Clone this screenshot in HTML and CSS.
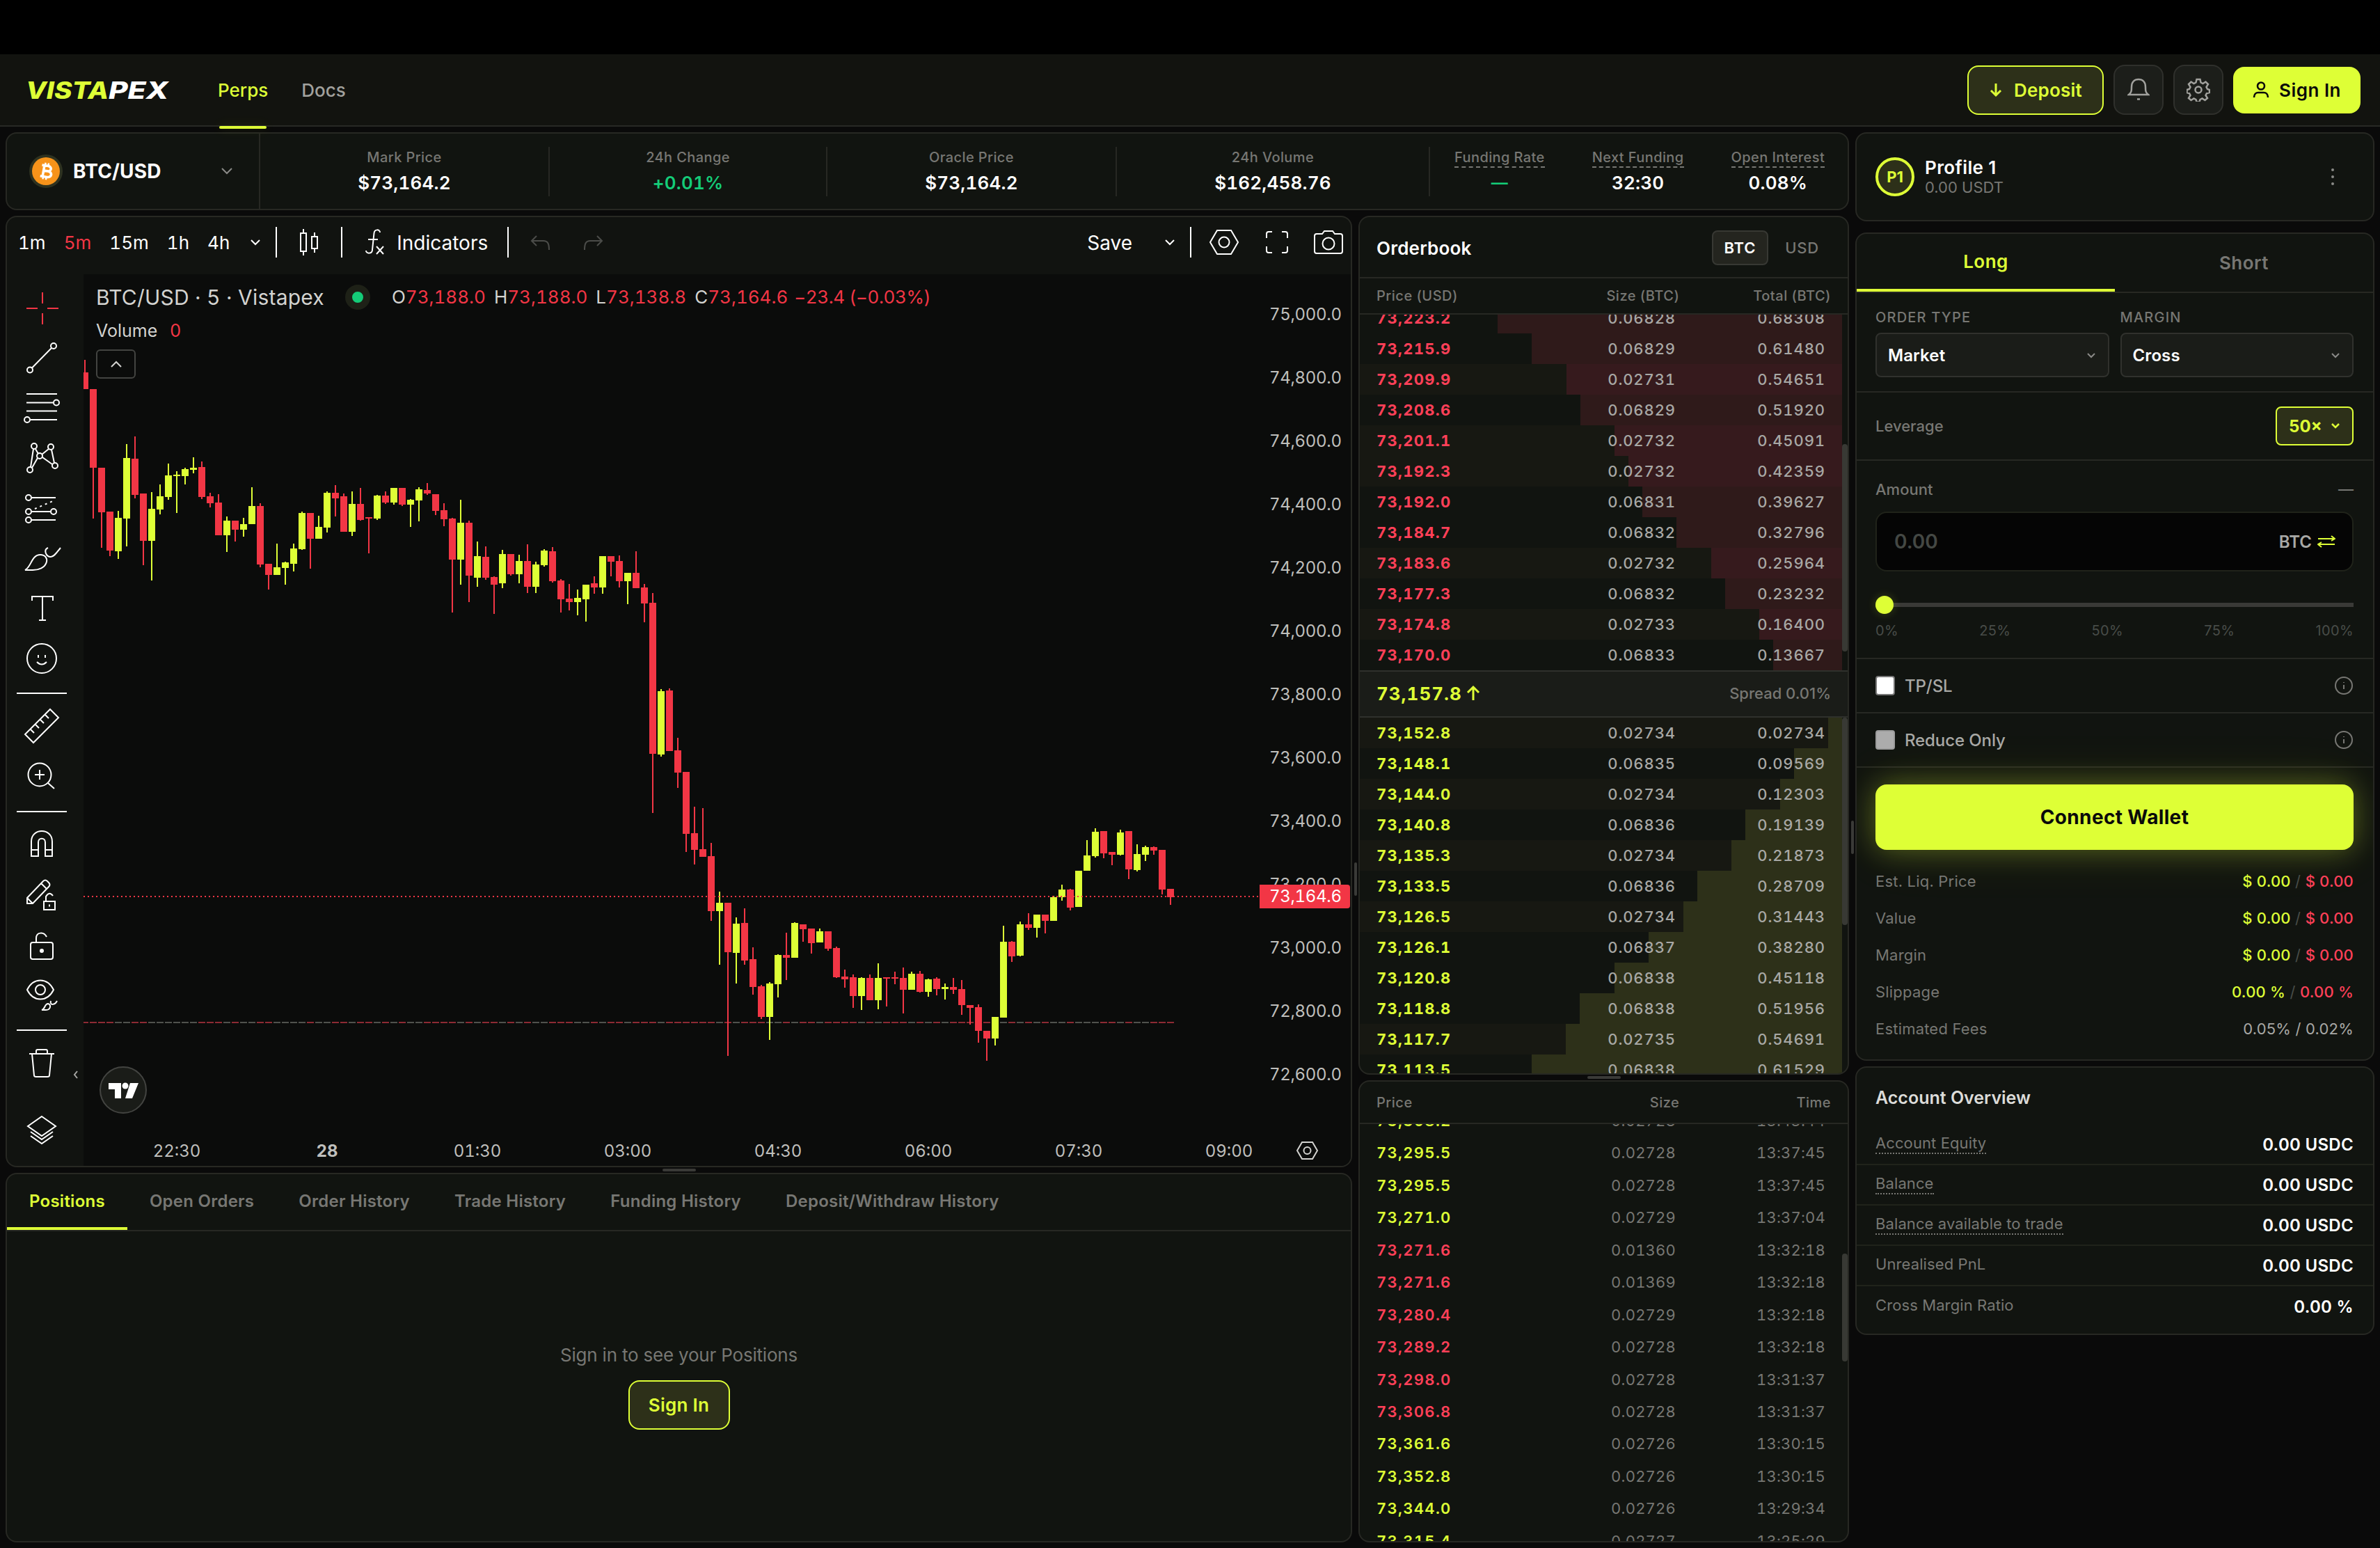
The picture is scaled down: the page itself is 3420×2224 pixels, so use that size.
FILE: index.html
```
<!DOCTYPE html>
<html lang="en">
<head>
  <meta charset="UTF-8" />
  <title>BTC/USD | Vistapex</title>
  <link rel="stylesheet" href="styles.css">
</head>
<body>

  <div class="notch"></div>

  <header class="header">
    <svg class="logo" width="208" height="40" viewBox="0 0 208 40">
      <g font-family="Inter, sans-serif" font-size="33.500" font-weight="800" font-style="italic">
        <text x="-1" y="33" fill="#deff36" textLength="119" lengthAdjust="spacingAndGlyphs">VISTA</text>
        <text x="118" y="33" fill="#ffffff" textLength="86" lengthAdjust="spacingAndGlyphs">PEX</text>
      </g>
    </svg>
    <nav class="nav">
      <a class="active">Perps</a>
      <a>Docs</a>
    </nav>
    <div class="header-actions">
      <button class="btn-outline deposit">
        <svg width="20" height="24" viewBox="0 0 20 24"><path d="M10 3v17M3 13l7 7 7-7" /></svg>
        Deposit
      </button>
      <button class="btn-icon">
        <svg width="32" height="34" viewBox="0 0 32 34"><path d="M2 24h28c-4-3-4-6-4-11C26 6 22 2 16 2S6 6 6 13c0 5 0 8-4 11zM14 30.500h4" /></svg>
      </button>
      <button class="btn-icon">
        <svg width="34" height="34" viewBox="0 0 34 34"><path d="M14.500 2h5l1 4.500 3 1.500 4-2.500 3.500 3.500-2.500 4 1.500 3 3 1v4l-4 1-1.500 3 2.500 4-3.500 3-4-2.500-3 1.500-1 3.500h-4l-1-3.500-3-1.500-4 2.500-3.500-3 2.500-4-1.500-3-3.500-1v-4l3.500-1 1.500-3-2.500-4 3.500-3.500 4 2.500 3-1.500z" /><circle cx="17" cy="17" r="4.500" /></svg>
      </button>
      <button class="btn-primary signin">
        <svg width="24" height="26" viewBox="0 0 24 26"><circle cx="12" cy="7.500" r="5" /><path d="M2 24c0-5 3-7 6-7h8c3 0 6 2 6 7" /></svg>
        Sign In
      </button>
    </div>
  </header>

  <main class="main">
    <div class="left">

      <section class="panel ticker">
        <div class="pair">
          <svg width="48" height="48" viewBox="0 0 48 48">
            <circle cx="24" cy="24" r="24" fill="#2e3220" />
            <circle cx="24" cy="24" r="20" fill="#f7931a" />
            <g transform="rotate(10 24 24)" fill="none" stroke="#fff" stroke-width="3.600">
              <path d="M17 16h9c6 0 6 7.500 0 7.500h-5.500h6.500c7 0 7 8.500 0 8.500h-10M20.500 16v16" />
              <path d="M21.500 12v4M26 12v4M21.500 32v4M26 32v4" stroke-width="2.500" />
            </g>
          </svg>
          <b>BTC/USD</b>
          <svg class="chev" width="18" height="12" viewBox="0 0 18 12"><path d="M2 2l7 7 7-7" /></svg>
        </div>
        <div class="stat w1"><span>Mark Price</span><b>$73,164.2</b></div>
        <div class="stat w2"><span>24h Change</span><b class="green">+0.01%</b></div>
        <div class="stat w3"><span>Oracle Price</span><b>$73,164.2</b></div>
        <div class="stat w4"><span>24h Volume</span><b>$162,458.76</b></div>
        <div class="stat-group">
          <div class="stat hint"><span>Funding Rate</span><b class="green dash">—</b></div>
          <div class="stat hint"><span>Next Funding</span><b>32:30</b></div>
          <div class="stat hint"><span>Open Interest</span><b>0.08%</b></div>
        </div>
      </section>

      <div class="workspace">
        <div class="chart-col">
          <section class="panel chart">
            <div class="chart-top">
              <span>1m</span><span class="on">5m</span><span>15m</span><span>1h</span><span>4h</span>
              <svg class="ct-chev" width="16" height="10" viewBox="0 0 16 10"><path d="M2 2l6 6 6-6" /></svg>
              <i></i>
              <svg class="ct-candles" width="32" height="42" viewBox="0 0 32 42"><path d="M3 8h8v26H3zM7 2v6M7 34v6M19 13h8v17h-8zM23 7v6M23 30v6" /></svg>
              <i></i>
              <svg class="ct-fx" width="30" height="40" viewBox="0 0 30 40"><path d="M22 6c0-5-8-5-8.500 1L11 31c0 6-9 6-9 1M5 16h14M17 26l10 11M27 26L17 37" /></svg>
              <span class="ct-ind">Indicators</span>
              <i></i>
              <svg class="ct-undo" width="30" height="24" viewBox="0 0 30 24"><path d="M9 2L2 9l7 7M2 9h17c6 0 8 4 8 13" /></svg>
              <svg class="ct-undo" width="30" height="24" viewBox="0 0 30 24"><path d="M21 2l7 7-7 7M28 9H11c-6 0-8 4-8 13" /></svg>
              <div class="chart-top-right">
                <span class="ct-save">Save</span>
                <svg class="ct-chev save-chev" width="16" height="10" viewBox="0 0 16 10"><path d="M2 2l6 6 6-6" /></svg>
                <i></i>
                <svg class="ct-gear" width="44" height="38" viewBox="0 0 44 38"><path d="M12 2h20l10 17-10 17H12L2 19z" /><circle cx="22" cy="19" r="7.500" /></svg>
                <svg class="ct-full" width="34" height="34" viewBox="0 0 34 34"><path d="M2 11V5q0-3 3-3h5M24 2h5q3 0 3 3v6M32 23v6q0 3-3 3h-5M10 32H5q-3 0-3-3v-6" /></svg>
                <svg class="ct-cam" width="44" height="36" viewBox="0 0 44 36"><path d="M5 6h8l3-4h12l3 4h8q3 0 3 3v22q0 3-3 3H5q-3 0-3-3V9q0-3 3-3z" /><circle cx="22" cy="20" r="8.500" /></svg>
              </div>
            </div>
            <div class="chart-body">
              <div class="tools">
                <svg class="red" viewBox="0 0 56 56"><path d="M29 5v16M29 35v16M6 28h16M36 28h16" /></svg>
                <svg viewBox="0 0 56 56"><circle cx="11" cy="44.500" r="4" /><circle cx="45" cy="10" r="4" /><path d="M14 41.500L42 13" /></svg>
                <svg viewBox="0 0 56 56"><path d="M6 7h44M6 19.500h38M6 31.500h44M12 44h38" /><circle cx="49" cy="19.500" r="4" /><circle cx="7" cy="44" r="4" /></svg>
                <svg viewBox="0 0 56 56"><circle cx="17" cy="10" r="4" /><circle cx="41" cy="11" r="4" /><circle cx="25" cy="24" r="4" /><circle cx="11" cy="44" r="4" /><circle cx="47" cy="38" r="4" /><path d="M16 14l-4 26M19 14l4 7M22 27L14 41M28 22l10-8M29 26l14 10M42 15l4 19" /></svg>
                <svg viewBox="0 0 56 56"><circle cx="9" cy="12" r="4" /><circle cx="9" cy="32" r="4" /><circle cx="45" cy="32" r="4" /><circle cx="9" cy="44" r="4" /><path d="M13 12h35M13 32h28M13 44h35" /><path d="M18 28L46 16" stroke-dasharray="3 5" /></svg>
                <svg viewBox="0 0 56 56"><path d="M4 44c9-4 9-22 22-22 7 0 10 5 9 10-2 9-12 12-20 12zM37 12c-7 3-3 13 4 13 5 0 9-7 14-13" /></svg>
                <svg viewBox="0 0 56 56"><path d="M14 16v-6h30v6M29 10v34M24 44h10" /></svg>
                <svg viewBox="0 0 56 56"><circle cx="28" cy="27" r="21" /><path d="M21 32q7 7 14 0" /><path d="M22 24h2M32 24h2" stroke-width="4" /></svg>
                <hr>
                <svg viewBox="0 0 56 56"><path d="M40 2l12 12-36 36L4 38zM12 31l5 5M19 24l5 5M26 17l5 5M33 10l5 5" /></svg>
                <svg viewBox="0 0 56 56"><circle cx="25" cy="24" r="16.500" /><path d="M37 36l9 8M18 24h14M25 17v14" /></svg>
                <hr>
                <svg viewBox="0 0 56 56"><path d="M13 43V22c0-20 30-20 30 0v21H33V23c0-7-10-7-10 0v20zM13 34h10M33 34h10" /></svg>
                <svg viewBox="0 0 56 56"><path d="M7 39v-8L30 7q3-3 6 0l2 2q3 3 0 6L15 39zM7 31l8 8M27 10l8 8M31 36h16v12H31zM34 36v-7q5-8 10-1" /><path d="M38 42h2" stroke-width="3" /></svg>
                <svg viewBox="0 0 56 56"><path d="M15 23h26q3 0 3 3v18q0 3-3 3H15q-3 0-3-3V26q0-3 3-3zM20 23v-6c0-9 11-10 15-2" /><circle cx="28" cy="35" r="1.500" stroke-width="3" /></svg>
                <svg viewBox="0 0 56 56"><path d="M7 19c9-18 29-18 38 0-9 18-29 18-38 0z" /><circle cx="26" cy="19" r="7" /><path d="M28 48c5-1 4-9 9-9 5 1 4 9-3 9zM41 35c-2 7 6 6 9 0" /></svg>
                <hr>
                <svg viewBox="0 0 56 56"><path d="M10 13h36M20 13V9q0-2 2-2h12q2 0 2 2v4M14 13l3 31q0 2 3 2h16q3 0 3-2l3-31" /></svg>
                <svg class="layers" viewBox="0 0 56 56"><path d="M28 9l20 14-20 14L8 23zM12 31l16 11 16-11M12 37l16 11 16-11" /></svg>
                <div class="tools-hide"><svg viewBox="0 0 8 14"><path d="M6 2L2 7l4 5" /></svg></div>
              </div>
              <div class="plot">
                <svg class="plot-svg" id="plot" viewBox="120 394 1821 1281"></svg>
                <div class="legend">
                  <div class="legend-main">
                    <span class="name">BTC/USD · 5 · Vistapex</span>
                    <em></em>
                    <span>O<b>73,188.0</b></span><span>H<b>73,188.0</b></span><span>L<b>73,138.8</b></span><span>C<b>73,164.6</b></span><span class="chg"><b>−23.4 (−0.03%)</b></span>
                  </div>
                  <div class="legend-vol">Volume <b>0</b></div>
                  <div class="legend-fold"><svg width="18" height="12" viewBox="0 0 18 12"><path d="M2 10l7-7 7 7" /></svg></div>
                </div>
              </div>
            </div>
          </section>

          <div class="split-h"><i></i></div>

          <section class="panel positions">
            <div class="tabs">
              <a class="active">Positions</a><a>Open Orders</a><a>Order History</a><a>Trade History</a><a>Funding History</a><a>Deposit/Withdraw History</a>
            </div>
            <div class="empty">
              <p>Sign in to see your Positions</p>
              <button class="btn-outline">Sign In</button>
            </div>
          </section>
        </div>

        <div class="split-v"><i></i></div>

        <div class="book-col">
          <section class="panel book">
            <div class="book-title">
              <b>Orderbook</b>
              <span class="unit on">BTC</span><span class="unit">USD</span>
            </div>
            <div class="cols head"><span>Price (USD)</span><span>Size (BTC)</span><span>Total (BTC)</span></div>
            <div class="book-list asks"><div class="rows" id="asks"></div><u></u></div>
            <div class="spread">
              <b>73,157.8</b>
              <svg width="20" height="24" viewBox="0 0 20 24"><path d="M10 22V3M2 11l8-8 8 8" /></svg>
              <span>Spread 0.01%</span>
            </div>
            <div class="book-list bids"><div class="rows" id="bids"></div><u></u></div>
          </section>

          <div class="split-h"><i></i></div>

          <section class="panel trades">
            <div class="cols head"><span>Price</span><span>Size</span><span>Time</span></div>
            <div class="book-list"><div class="rows" id="trades"></div><u></u></div>
          </section>
        </div>
      </div>
    </div>

    <div class="split-v outer"><i></i></div>

    <div class="right">
      <section class="panel profile">
        <div class="avatar">P1</div>
        <div class="who"><b>Profile 1</b><span>0.00 USDT</span></div>
        <svg width="8" height="28" viewBox="0 0 8 28"><circle cx="4" cy="4" r="2" /><circle cx="4" cy="14" r="2" /><circle cx="4" cy="24" r="2" /></svg>
      </section>

      <section class="panel order">
        <div class="side-tabs"><a class="active">Long</a><a>Short</a></div>
        <div class="block selects">
          <label>ORDER TYPE
            <div class="select">Market <svg width="12" height="8" viewBox="0 0 12 8"><path d="M1 1l5 5 5-5" /></svg></div>
          </label>
          <label>MARGIN
            <div class="select">Cross <svg width="12" height="8" viewBox="0 0 12 8"><path d="M1 1l5 5 5-5" /></svg></div>
          </label>
        </div>
        <div class="block leverage">
          <span>Leverage</span>
          <button class="btn-outline lev">50× <svg width="14" height="10" viewBox="0 0 14 10"><path d="M2 2l5 5 5-5" /></svg></button>
        </div>
        <div class="block amount">
          <div class="amount-head"><span>Amount</span><span>—</span></div>
          <div class="amount-input">
            <span>0.00</span>
            <b>BTC</b>
            <svg width="26" height="18" viewBox="0 0 26 18"><path d="M1 5h24M20 1l5 4-5 3M25 13H1M6 10l-5 3 5 4" /></svg>
          </div>
          <div class="slider"><i></i></div>
          <div class="ticks"><span>0%</span><span>25%</span><span>50%</span><span>75%</span><span>100%</span></div>
        </div>
        <div class="block check">
          <i></i><span>TP/SL</span>
          <svg width="28" height="28" viewBox="0 0 28 28"><circle cx="14" cy="14" r="12" /><path d="M14 13v6M14 9v1" /></svg>
        </div>
        <div class="block check">
          <i class="off"></i><span>Reduce Only</span>
          <svg width="28" height="28" viewBox="0 0 28 28"><circle cx="14" cy="14" r="12" /><path d="M14 13v6M14 9v1" /></svg>
        </div>
        <div class="submit">
          <button class="btn-primary connect">Connect Wallet</button>
          <div class="info"><span>Est. Liq. Price</span><p><b>$ 0.00</b> / <b class="sell">$ 0.00</b></p></div>
          <div class="info"><span>Value</span><p><b>$ 0.00</b> / <b class="sell">$ 0.00</b></p></div>
          <div class="info"><span>Margin</span><p><b>$ 0.00</b> / <b class="sell">$ 0.00</b></p></div>
          <div class="info"><span>Slippage</span><p><b>0.00 %</b> / <b class="sell">0.00 %</b></p></div>
          <div class="info"><span>Estimated Fees</span><p class="fees">0.05% / 0.02%</p></div>
        </div>
      </section>

      <section class="panel account">
        <h3>Account Overview</h3>
        <div class="acc"><span class="dot">Account Equity</span><b>0.00 USDC</b></div>
        <div class="acc"><span class="dot">Balance</span><b>0.00 USDC</b></div>
        <div class="acc"><span class="dot">Balance available to trade</span><b>0.00 USDC</b></div>
        <div class="acc"><span>Unrealised PnL</span><b>0.00 USDC</b></div>
        <div class="acc"><span>Cross Margin Ratio</span><b>0.00 %</b></div>
      </section>
    </div>
  </main>

<script src="script.js"></script>
</body>
</html>
```
FILE: styles.css
```
* {
  box-sizing: border-box;
}
body {
  margin: 0;
  height: 2224px;
  overflow: hidden;
  display: flex;
  flex-direction: column;
  background: #0a0a0a;
  color: #fff;
  font-family: Inter, "Open Sans", sans-serif;
  font-size: 22px;
}
svg {
  fill: none;
  stroke: currentColor;
  stroke-width: 2;
  flex-shrink: 0;
}
button {
  font-family: inherit;
  display: flex;
  align-items: center;
  justify-content: center;
  border: none;
  padding: 0;
}

.notch {
  height: 78px;
  background: #000;
  flex-shrink: 0;
}

/* Header */
.header {
  height: 104px;
  flex-shrink: 0;
  display: flex;
  align-items: center;
  padding: 0 28px 0 38px;
  background: #12130f;
  border-bottom: 2px solid #282925;
}
.logo {
  stroke: none;
  overflow: visible;
}
.nav {
  display: flex;
  align-self: stretch;
  gap: 48px;
  margin-left: 67px;
}
.nav a {
  display: flex;
  align-items: center;
  font-size: 26px;
  font-weight: 500;
  color: #a1a19d;
  position: relative;
}
.nav a.active {
  color: #deff36;
}
.nav a.active::after {
  content: "";
  position: absolute;
  left: 2px;
  right: 2px;
  bottom: -5px;
  height: 4px;
  border-radius: 2px;
  background: #deff36;
  box-shadow: 0 0 16px rgb(222 255 54 / 0.15);
}
.header-actions {
  display: flex;
  align-items: center;
  gap: 14px;
  margin-left: auto;
}
.btn-outline {
  background: #2d3019;
  border: 2px solid #deff36;
  border-radius: 16px;
  color: #deff36;
  font-size: 26px;
  font-weight: 600;
}
.btn-outline svg {
  stroke-width: 3;
}
.deposit {
  width: 196px;
  height: 71px;
  gap: 16px;
  letter-spacing: 0.2px;
}
.btn-icon {
  width: 72px;
  height: 72px;
  border: 2px solid #2f302c;
  border-radius: 16px;
  background: #1c1e1a;
  color: #a1a19d;
}
.btn-icon svg {
  stroke-width: 2.5;
}
.btn-primary {
  background: #deff36;
  color: #0a0a0a;
  font-weight: 600;
  font-size: 26px;
  border-radius: 16px;
}
.btn-primary svg {
  stroke-width: 2.6;
}
.signin {
  width: 183px;
  height: 67px;
  gap: 14px;
  letter-spacing: 0.5px;
}

/* Layout */
.main {
  flex: 1;
  display: flex;
  padding: 8px;
  min-height: 0;
}
.left {
  width: 2649px;
  display: flex;
  flex-direction: column;
  gap: 8px;
}
.right {
  width: 746px;
  display: flex;
  flex-direction: column;
}
.panel {
  background: #111410;
  border: 2px solid #272823;
  border-radius: 16px;
  overflow: hidden;
}
.workspace {
  flex: 1;
  display: flex;
  min-height: 0;
}
.chart-col {
  width: 1935px;
  display: flex;
  flex-direction: column;
}
.book-col {
  width: 705px;
  display: flex;
  flex-direction: column;
}
.split-v {
  width: 9px;
  display: flex;
  align-items: center;
  justify-content: center;
}
.split-v i {
  width: 4px;
  height: 48px;
  border-radius: 2px;
  background: #3a3a37;
}
.split-h {
  height: 8px;
  flex-shrink: 0;
  display: flex;
  align-items: center;
  justify-content: center;
}
.split-h i {
  width: 48px;
  height: 4px;
  border-radius: 2px;
  background: #3a3a37;
}

/* Ticker */
.ticker {
  height: 112px;
  flex-shrink: 0;
  display: flex;
  align-items: center;
}
.pair {
  width: 364px;
  height: 108px;
  border-right: 2px solid #272823;
  display: flex;
  align-items: center;
  padding: 0 37px 0 32px;
  font-size: 28px;
}
.pair b {
  margin-left: 15px;
  letter-spacing: 0.2px;
}
.pair svg:first-child {
  stroke: none;
}
.chev {
  margin-left: auto;
  color: #8a8a87;
}
.stat {
  height: 71px;
  display: flex;
  flex-direction: column;
  align-items: center;
  justify-content: center;
  gap: 7px;
  padding-bottom: 2px;
  border-right: 2px solid #272823;
}
.stat span {
  font-size: 20px;
  line-height: 26px;
  font-weight: 500;
  color: #777773;
  letter-spacing: 0.4px;
  border-bottom: 2px solid transparent;
}
.stat b {
  font-size: 26px;
  line-height: 30px;
  font-weight: 600;
  letter-spacing: 0.2px;
  font-variant-numeric: tabular-nums;
}
.stat .dash {
  font-size: 24px;
}
.w1 { width: 416px; }
.w2 { width: 399px; }
.w3 { width: 416px; }
.w4 { width: 450px; }
.green {
  color: #14cc78;
}
.stat-group {
  display: flex;
  gap: 68px;
  padding-left: 35px;
}
.stat-group .stat {
  border: none;
}
.hint span {
  border-bottom: 2px dashed #777773;
}

/* Chart */
.chart {
  height: 1367px;
  flex-shrink: 0;
  display: flex;
  flex-direction: column;
  background: #111310;
}
.chart-top {
  height: 82px;
  flex-shrink: 0;
  display: flex;
  align-items: flex-start;
  padding: 14px 10px 0 16px;
  font-size: 26px;
  line-height: 46px;
  font-variant-numeric: tabular-nums;
}
.chart-top span {
  margin-right: 26px;
}
.chart-top svg {
  align-self: flex-start;
}
.chart-top i {
  width: 2px;
  height: 44px;
  background: #fff;
}
.chart-top .on {
  color: #f23645;
}
.chart-top .ct-chev {
  margin: 17px 21px 0 3px;
}
.ct-candles {
  margin: 1px 29px 0 31px;
}
.ct-fx {
  margin: 2px 16px 0 32px;
}
.chart-top .ct-ind {
  font-size: 28px;
  margin-right: 28px;
}
.chart-top .ct-save {
  font-size: 28px;
}
.ct-undo {
  color: #4b4c49;
  margin: 11px 14px 0 31px;
}
.chart-top-right {
  display: flex;
  margin-left: auto;
}
.chart-top-right .save-chev {
  margin: 17px 21px 0 20px;
}
.ct-gear { margin: 3px 0 0 25px; }
.ct-full { margin: 5px 0 0 37px; }
.ct-cam { margin: 4px 0 0 35px; }

.chart-body {
  flex: 1;
  display: flex;
  min-height: 0;
}
.tools {
  width: 110px;
  display: flex;
  flex-direction: column;
  padding: 13px 0 0 14px;
  position: relative;
}
.tools svg {
  width: 72px;
  height: 72px;
  padding: 8px;
}
.tools .red {
  color: #f23645;
}
.tools hr {
  width: 72px;
  height: 2px;
  margin: 12px 0;
  border: none;
  background: #fff;
}
.tools .layers {
  margin-top: 22px;
}
.tools-hide {
  position: absolute;
  left: 95px;
  top: 1143px;
  color: #a8a8a5;
}
.tools .tools-hide svg {
  display: block;
  width: 8px;
  height: 14px;
  padding: 0;
}
.plot {
  flex: 1;
  position: relative;
  background: #0b0c0b;
}
.plot-svg {
  display: block;
  width: 1821px;
  height: 1281px;
}
.plot-svg text {
  stroke: none;
  fill: #bfbfbc;
  font: 24px Inter, sans-serif;
  font-variant-numeric: tabular-nums;
}
.legend {
  position: absolute;
  left: 18px;
  top: 13px;
  color: #d3d3d0;
}
.legend b {
  font-weight: 400;
  color: #f23645;
}
.legend-main {
  display: flex;
  align-items: center;
  font-size: 26px;
  line-height: 40px;
  font-variant-numeric: tabular-nums;
}
.legend-main .name {
  font-size: 30px;
  margin-right: 30px;
  letter-spacing: 0.2px;
}
.legend-main em {
  width: 36px;
  height: 36px;
  margin-right: 31px;
  border: 10px solid #1e2117;
  border-radius: 50%;
  background: #14cc78;
}
.legend-main span {
  margin-right: 12px;
}
.legend-main .chg {
  margin-left: -3px;
  letter-spacing: -0.4px;
}
.legend-vol {
  font-size: 25px;
  line-height: 40px;
  margin-top: 8px;
}
.legend-vol b {
  margin-left: 11px;
}
.legend-fold {
  width: 57px;
  height: 42px;
  margin-top: 7px;
  border: 2px solid #434441;
  border-radius: 6px;
  display: flex;
  align-items: center;
  justify-content: center;
}

/* Positions */
.positions {
  flex: 1;
  display: flex;
  flex-direction: column;
}
.tabs {
  height: 82px;
  display: flex;
  border-bottom: 2px solid #272823;
}
.tabs a {
  padding: 2px 32px 0;
  line-height: 74px;
  font-size: 24px;
  font-weight: 600;
  letter-spacing: 0.25px;
  color: #777773;
}
.tabs .active {
  color: #deff36;
  border-bottom: 4px solid #deff36;
}
.empty {
  flex: 1;
  display: flex;
  flex-direction: column;
  align-items: center;
  justify-content: center;
  padding-top: 2px;
}
.empty p {
  margin: 0 0 20px;
  font-size: 26px;
  line-height: 32px;
  letter-spacing: -0.2px;
  color: #777773;
}
.empty button {
  width: 146px;
  height: 71px;
  letter-spacing: 0.3px;
}

/* Orderbook */
.book {
  height: 1234px;
  flex-shrink: 0;
  display: flex;
  flex-direction: column;
}
.book-title {
  height: 88px;
  flex-shrink: 0;
  display: flex;
  align-items: center;
  padding: 2px 17px 0 24px;
  border-bottom: 2px solid #272823;
  font-size: 26px;
}
.book-title b {
  margin-right: auto;
  font-weight: 600;
  letter-spacing: 0.2px;
}
.unit {
  padding: 0 24px;
  font-size: 22px;
  font-weight: 500;
  line-height: 46px;
  letter-spacing: 0.8px;
  color: #777773;
}
.unit.on {
  padding: 0 16px;
  border: 2px solid #373833;
  border-radius: 8px;
  background: #24251f;
  color: #fff;
  font-weight: 600;
}
.cols {
  display: grid;
  grid-template-columns: 1fr 1fr 1fr;
  padding: 0 24px;
}
.cols span {
  text-align: right;
}
.cols span:first-child {
  text-align: left;
}
.head {
  height: 52px;
  flex-shrink: 0;
  line-height: 50px;
  font-size: 20px;
  font-weight: 500;
  letter-spacing: 0.5px;
  color: #777773;
  border-bottom: 2px solid #272823;
}
.book-list {
  display: flex;
  overflow: hidden;
}
.rows {
  flex: 1;
  display: flex;
  flex-direction: column;
}
.book-list u {
  width: 8px;
  height: 298px;
  border-radius: 4px;
  background: #383934;
}
.row {
  height: 44px;
  flex-shrink: 0;
  line-height: 45px;
  font-weight: 500;
  letter-spacing: 0.9px;
  color: #a8a8a5;
  font-variant-numeric: tabular-nums;
  position: relative;
}
.row span:first-child {
  font-weight: 700;
  letter-spacing: 1.3px;
}
.row span {
  position: relative;
  z-index: 1;
}
.row .depth {
  position: absolute;
  right: 0;
  top: 0;
  bottom: 0;
}
.row.small {
  background: #171812;
}
.asks {
  height: 511px;
}
.asks .rows {
  justify-content: flex-end;
}
.asks u {
  margin-top: 186px;
}
.asks .row span:first-child {
  color: #ff4058;
}
.asks .depth {
  background: #2f1a1a;
}
.asks .small .depth {
  background: #361a1d;
}
.bids {
  flex: 1;
}
.bids .row span:first-child {
  color: #deff36;
}
.bids .depth {
  background: #2d3019;
}
.spread {
  height: 68px;
  flex-shrink: 0;
  display: flex;
  align-items: center;
  padding: 0 24px 2px;
  background: #1a1c18;
  border-top: 2px solid #2f302c;
  border-bottom: 2px solid #2f302c;
}
.spread b {
  font-size: 26px;
  letter-spacing: 1px;
  color: #deff36;
  font-variant-numeric: tabular-nums;
}
.spread svg {
  margin-left: 6px;
  color: #deff36;
  stroke-width: 3;
}
.spread span {
  margin-left: auto;
  color: #777773;
  font-weight: 500;
}

/* Trades */
.trades {
  flex: 1;
  min-height: 0;
  display: flex;
  flex-direction: column;
}
.trades .head {
  height: 61px;
  line-height: 60px;
}
.trades .book-list {
  flex: 1;
}
.trades .book-list u {
  height: 155px;
  margin-top: 186px;
}
.trades .rows {
  margin-top: -28px;
}
.trades .row {
  height: 46.450px;
  line-height: 46px;
  font-weight: 400;
  letter-spacing: 0.2px;
  color: #777773;
}
.trades .row span:first-child {
  font-weight: 600;
  letter-spacing: 1.3px;
  color: #deff36;
}
.trades .row.sell span:first-child {
  color: #ff4058;
}

/* Profile */
.profile {
  height: 128px;
  flex-shrink: 0;
  display: flex;
  align-items: center;
  padding: 0 54px 0 27px;
  margin-bottom: 16px;
}
.avatar {
  width: 56px;
  height: 56px;
  border: 4px solid #deff36;
  border-radius: 50%;
  background: #2d3019;
  color: #deff36;
  font-size: 22px;
  font-weight: 700;
  line-height: 48px;
  text-align: center;
}
.who {
  display: flex;
  flex-direction: column;
  margin: 0 auto 0 15px;
}
.who b {
  font-size: 26px;
  line-height: 30px;
  font-weight: 600;
  letter-spacing: 0.4px;
}
.who span {
  line-height: 26px;
  color: #777773;
}
.profile svg {
  fill: #8a8a87;
  stroke: none;
}

/* Order form */
.order {
  height: 1190px;
  flex-shrink: 0;
  margin-bottom: 8px;
}
.side-tabs {
  height: 85px;
  display: flex;
  border-bottom: 2px solid #272823;
}
.side-tabs a {
  flex: 1;
  text-align: center;
  font-size: 26px;
  font-weight: 600;
  letter-spacing: 0.5px;
  line-height: 84px;
  color: #777773;
}
.side-tabs .active {
  color: #deff36;
  line-height: 80px;
  border-bottom: 4px solid #deff36;
}
.block {
  padding: 0 28px 0 27px;
  border-bottom: 2px solid #272823;
}
.selects {
  height: 143px;
  display: grid;
  grid-template-columns: 1fr 1fr;
  gap: 16px;
  padding-top: 22px;
}
.selects label {
  font-size: 20px;
  line-height: 26px;
  font-weight: 500;
  letter-spacing: 1.2px;
  color: #777773;
}
.select {
  height: 64px;
  margin-top: 9px;
  padding: 1px 18px 0 16px;
  display: flex;
  align-items: center;
  justify-content: space-between;
  border: 2px solid #30312d;
  border-radius: 8px;
  background: #1a1c18;
  font-size: 24px;
  font-weight: 600;
  letter-spacing: 0.1px;
  color: #fff;
}
.select svg {
  color: #8a8a87;
}
.leverage {
  height: 98px;
  display: flex;
  align-items: center;
  justify-content: space-between;
  font-weight: 500;
  color: #777773;
}
.lev {
  width: 112px;
  height: 56px;
  gap: 12px;
  border-radius: 8px;
  font-size: 24px;
  font-weight: 700;
}
.lev svg {
  stroke-width: 2.5;
}
.amount {
  height: 285px;
  padding-top: 26px;
}
.amount-head {
  display: flex;
  justify-content: space-between;
  line-height: 30px;
  font-weight: 500;
  color: #777773;
}
.amount-input {
  height: 86px;
  margin-top: 17px;
  padding: 0 24px 0 25px;
  display: flex;
  align-items: center;
  border: 2px solid #20231a;
  border-radius: 16px;
  background: #050505;
}
.amount-input span {
  margin-right: auto;
  font-size: 28px;
  font-weight: 600;
  color: #444844;
}
.amount-input b {
  margin-right: 8px;
  font-size: 24px;
  font-weight: 600;
  color: #a8a8a5;
}
.amount-input svg {
  color: #deff36;
}
.slider {
  height: 26px;
  margin-top: 35px;
  display: flex;
  align-items: center;
  background: linear-gradient(#3a3a37, #3a3a37) center / 100% 6px no-repeat;
}
.slider i {
  width: 26px;
  height: 26px;
  border-radius: 50%;
  background: #deff36;
  box-shadow: 0 0 14px rgb(222 255 54 / 0.2);
}
.ticks {
  display: flex;
  justify-content: space-between;
  margin-top: 11px;
  font-size: 20px;
  line-height: 26px;
  letter-spacing: 0.4px;
  color: #484c48;
}
.check {
  height: 78px;
  display: flex;
  align-items: center;
  font-size: 24px;
  font-weight: 500;
  letter-spacing: -0.1px;
  color: #a8a8a5;
}
.check i {
  width: 28px;
  height: 28px;
  margin-right: 14px;
  border: 2px solid #777;
  border-radius: 4px;
  background: #fff;
}
.check i.off {
  border-color: #9c9c9c;
  background: #acacac;
}
.check svg {
  margin-left: auto;
  color: #777773;
}
.submit {
  padding: 24px 28px 0 27px;
}
.connect {
  width: 100%;
  height: 94px;
  margin-bottom: 18px;
  font-size: 28px;
  font-weight: 700;
  letter-spacing: 0.35px;
  box-shadow: 0 0 40px rgb(222 255 54 / 0.3), 0 0 80px rgb(222 255 54 / 0.1);
}
.info {
  height: 53px;
  display: flex;
  align-items: center;
  justify-content: space-between;
  letter-spacing: 0.2px;
  color: #777773;
  position: relative;
}
.info p {
  margin: 0;
  color: #484c48;
}
.info b {
  font-weight: 500;
  color: #deff36;
}
.info .sell {
  color: #ff4058;
}
.info .fees {
  color: #a8a8a5;
}

/* Account */
.account {
  height: 386px;
  flex-shrink: 0;
}
.account h3 {
  margin: 0;
  padding: 27px 27px 23px;
  font-size: 25px;
  line-height: 32px;
  font-weight: 600;
  color: #dcdcd9;
}
.acc {
  height: 58px;
  padding: 0 28px 0 27px;
  display: flex;
  align-items: center;
  justify-content: space-between;
  border-bottom: 2px solid #20231a;
  color: #777773;
  letter-spacing: 0.1px;
}
.acc:last-child {
  border: none;
}
.acc span {
  line-height: 26px;
  padding-bottom: 1px;
  margin-bottom: 2px;
  border-bottom: 2px solid transparent;
}
.acc .dot {
  border-bottom: 2px dotted #777773;
}
.acc b {
  font-size: 24px;
  font-weight: 600;
  letter-spacing: 0.3px;
  color: #fff;
}
```
FILE: script.js
```
// side, high, body top, body bottom, low
const candles = [
  { base: 500, step: 1 / 3, bars: [
    ['r', 51, 105, 177, 177], ['r', 177, 177, 516, 735], ['r', 516, 516, 708, 861], ['r', 705, 705, 873, 897],
    ['g', 702, 732, 876, 909], ['g', 414, 474, 735, 855], ['r', 381, 477, 633, 648], ['r', 627, 627, 831, 936],
    ['g', 621, 693, 831, 1002], ['g', 588, 639, 696, 717], ['g', 498, 549, 642, 654], ['g', 531, 546, 552, 711],
    ['g', 516, 522, 552, 588], ['g', 471, 516, 525, 540], ['r', 489, 513, 642, 651], ['r', 624, 639, 669, 687],
    ['r', 630, 666, 807, 807], ['g', 726, 744, 807, 879], ['r', 744, 744, 783, 834], ['g', 732, 759, 783, 813],
    ['g', 600, 681, 759, 759], ['r', 669, 681, 933, 945], ['r', 930, 930, 978, 1041], ['g', 843, 945, 978, 978],
    ['g', 921, 924, 948, 1020], ['g', 843, 864, 930, 963], ['g', 705, 711, 867, 870], ['r', 711, 711, 822, 951],
    ['g', 723, 771, 822, 822], ['g', 618, 624, 774, 795], ['r', 591, 624, 648, 726], ['r', 627, 639, 792, 792],
    ['g', 618, 672, 792, 810], ['r', 603, 672, 741, 744], ['r', 729, 729, 735, 885], ['g', 633, 636, 735, 741],
    ['r', 618, 636, 666, 672], ['g', 603, 603, 666, 675], ['r', 603, 603, 675, 681], ['g', 651, 654, 675, 771],
    ['g', 600, 609, 657, 747], ['r', 582, 612, 627, 633], ['r', 630, 630, 702, 720], ['r', 669, 699, 738, 768],
    ['r', 732, 735, 912, 1140], ['g', 654, 753, 912, 1020], ['r', 744, 753, 981, 1095], ['g', 834, 897, 990, 1029],
    ['r', 855, 900, 990, 999], ['r', 984, 987, 1020, 1146], ['g', 870, 888, 1014, 1035], ['r', 888, 888, 975, 981],
    ['g', 891, 918, 975, 1014], ['r', 846, 918, 1029, 1056], ['g', 921, 933, 1029, 1056], ['g', 867, 873, 936, 942],
    ['r', 858, 876, 1005, 1011], ['r', 996, 1002, 1083, 1140], ['r', 1017, 1080, 1095, 1131], ['g', 1041, 1077, 1095, 1152],
    ['g', 1020, 1020, 1083, 1179], ['r', 984, 1014, 1032, 1059], ['g', 897, 897, 1032, 1059], ['r', 897, 897, 921, 984],
    ['r', 894, 918, 1005, 1032], ['g', 969, 969, 1005, 1104], ['r', 876, 969, 1035, 1035], ['r', 1017, 1032, 1101, 1182],
  ] },
  { base: 750, step: 1 / 1.96, bars: [
    ['r', 200, 227, 653, 819], ['g', 470, 476, 655, 661], ['r', 468, 474, 645, 645], ['r', 608, 643, 706, 749],
    ['r', 704, 704, 878, 929], ['r', 802, 876, 923, 964], ['r', 806, 921, 943, 943], ['r', 904, 941, 1096, 1123],
    ['g', 1041, 1072, 1096, 1247], ['r', 1072, 1072, 1211, 1503], ['g', 1113, 1131, 1213, 1299], ['r', 1088, 1129, 1235, 1247],
    ['r', 1198, 1231, 1309, 1331], ['r', 1303, 1307, 1394, 1399], ['g', 1296, 1299, 1394, 1458], ['g', 1217, 1219, 1301, 1339],
    ['r', 1156, 1219, 1227, 1290], ['g', 1127, 1129, 1227, 1227], ['r', 1133, 1133, 1147, 1182], ['r', 1145, 1145, 1186, 1215],
    ['g', 1145, 1152, 1184, 1184], ['r', 1152, 1152, 1201, 1207], ['r', 1196, 1200, 1282, 1284], ['r', 1260, 1280, 1288, 1311],
    ['r', 1274, 1282, 1335, 1368], ['g', 1282, 1284, 1335, 1374], ['r', 1274, 1284, 1347, 1347], ['g', 1243, 1284, 1347, 1372],
    ['r', 1282, 1282, 1286, 1364], ['r', 1266, 1282, 1286, 1301], ['r', 1254, 1284, 1317, 1384], ['g', 1266, 1272, 1317, 1317],
    ['r', 1264, 1272, 1323, 1325], ['g', 1286, 1288, 1323, 1337], ['r', 1282, 1286, 1315, 1333], ['g', 1299, 1309, 1315, 1345],
    ['r', 1284, 1309, 1317, 1329], ['r', 1290, 1315, 1360, 1388], ['r', 1360, 1360, 1368, 1415], ['r', 1358, 1366, 1433, 1466],
    ['r', 1433, 1433, 1454, 1517], ['g', 1394, 1394, 1454, 1474], ['g', 1137, 1182, 1396, 1396], ['r', 1180, 1182, 1223, 1239],
    ['g', 1125, 1133, 1221, 1223], ['r', 1102, 1133, 1143, 1149], ['g', 1105, 1105, 1143, 1170], ['r', 1105, 1105, 1123, 1158],
    ['g', 1053, 1056, 1123, 1123], ['g', 1021, 1035, 1056, 1066], ['r', 1033, 1035, 1086, 1094], ['g', 982, 982, 1084, 1084],
    ['g', 896, 939, 982, 982], ['g', 862, 872, 941, 945], ['r', 870, 870, 933, 947], ['r', 929, 929, 937, 966],
    ['g', 866, 874, 937, 939], ['r', 870, 870, 978, 1005], ['g', 907, 935, 980, 984], ['g', 911, 915, 937, 955],
    ['r', 913, 915, 925, 937], ['r', 923, 923, 1035, 1049], ['r', 1033, 1033, 1056, 1078],
  ] },
];

const asks = [
  ['73,223.2', '0.06828', '0.68308'], ['73,215.9', '0.06829', '0.61480'], ['73,209.9', '0.02731', '0.54651'],
  ['73,208.6', '0.06829', '0.51920'], ['73,201.1', '0.02732', '0.45091'], ['73,192.3', '0.02732', '0.42359'],
  ['73,192.0', '0.06831', '0.39627'], ['73,184.7', '0.06832', '0.32796'], ['73,183.6', '0.02732', '0.25964'],
  ['73,177.3', '0.06832', '0.23232'], ['73,174.8', '0.02733', '0.16400'], ['73,170.0', '0.06833', '0.13667'],
];
const bids = [
  ['73,152.8', '0.02734', '0.02734'], ['73,148.1', '0.06835', '0.09569'], ['73,144.0', '0.02734', '0.12303'],
  ['73,140.8', '0.06836', '0.19139'], ['73,135.3', '0.02734', '0.21873'], ['73,133.5', '0.06836', '0.28709'],
  ['73,126.5', '0.02734', '0.31443'], ['73,126.1', '0.06837', '0.38280'], ['73,120.8', '0.06838', '0.45118'],
  ['73,118.8', '0.06838', '0.51956'], ['73,117.7', '0.02735', '0.54691'], ['73,113.5', '0.06838', '0.61529'],
];
const trades = [
  ['buy', '73,308.2', '0.02728', '13:43:44'], ['buy', '73,295.5', '0.02728', '13:37:45'], ['buy', '73,295.5', '0.02728', '13:37:45'],
  ['buy', '73,271.0', '0.02729', '13:37:04'], ['sell', '73,271.6', '0.01360', '13:32:18'], ['sell', '73,271.6', '0.01369', '13:32:18'],
  ['sell', '73,280.4', '0.02729', '13:32:18'], ['sell', '73,289.2', '0.02728', '13:32:18'], ['sell', '73,298.0', '0.02728', '13:31:37'],
  ['sell', '73,306.8', '0.02728', '13:31:37'], ['buy', '73,361.6', '0.02726', '13:30:15'], ['buy', '73,352.8', '0.02726', '13:30:15'],
  ['buy', '73,344.0', '0.02726', '13:29:34'], ['buy', '73,315.4', '0.02727', '13:25:29'],
];

function bookRows(id, data) {
  document.getElementById(id).innerHTML = data.map(([price, size, total]) => `
    <div class="row cols ${size < 0.03 ? 'small' : ''}">
      <span>${price}</span><span>${size}</span><span>${total}</span>
      <div class="depth" style="width:${Math.round(total * 725)}px"></div>
    </div>`).join('');
}
bookRows('asks', asks);
bookRows('bids', bids);

document.getElementById('trades').innerHTML = trades.map(([side, price, size, time]) => `
  <div class="row cols ${side}"><span>${price}</span><span>${size}</span><span>${time}</span></div>`).join('');

// Chart
const colors = { r: '#f23645', g: '#deff36' };
let svg = '';
let i = 0;
for (let p = 75000; p >= 72600; p -= 200) {
  const y = 451 + (75000 - p) * 0.455;
  svg += `<text x="1928" y="${y + 8.5}" text-anchor="end" textLength="104">${p.toLocaleString('en-US')}.0</text>`;
}
['22:30', '28', '01:30', '03:00', '04:30', '06:00', '07:30', '09:00'].forEach((t, n) => {
  svg += `<text x="${254 + n * 216}" y="1662" text-anchor="middle" ${t === '28' ? 'style="font-weight:700"' : ''}>${t}</text>`;
});
candles.forEach(({ base, step, bars }) => {
  bars.forEach(([side, high, top, bottom, low]) => {
    const x = 122 + i * 12;
    const y = v => Math.round(base + v * step);
    svg += `<path d="M${x - 5} 1469h10" stroke="${side === 'r' ? '#8d2a33' : '#50524d'}" stroke-width="2" />`;
    svg += `<path d="M${x} ${y(high)}V${y(low)}" stroke="${colors[side]}" stroke-width="2" />`;
    svg += `<rect x="${x - 5}" y="${y(top)}" width="10" height="${Math.max(2, y(bottom) - y(top))}" fill="${colors[side]}" stroke="none" />`;
    i++;
  });
});
svg += '<path d="M120 1288H1810" stroke="#f23645" stroke-width="2" stroke-dasharray="2 4" />';
svg += '<path d="M1810 1271h126q4 0 4 4v26q0 4-4 4h-126z" fill="#f23645" stroke="none" />';
svg += '<text x="1928" y="1296" text-anchor="end" textLength="104" style="fill:#fff">73,164.6</text>';
// time axis settings and TradingView mark
svg += '<g stroke="#d3d3d0"><path d="M1871 1641h15l7 12-7 12h-15l-7-12z" /><circle cx="1878.500" cy="1653" r="5" /></g>';
svg += '<circle cx="177" cy="1566" r="33" fill="#1a1c18" stroke="#434441" />';
svg += '<path d="M156 1556h18v22h-9v-13h-9zM187 1556h12l-9 22h-10z" fill="#fff" stroke="none" /><circle cx="180" cy="1560" r="4.500" fill="#fff" stroke="none" />';
document.getElementById('plot').innerHTML = svg;
```
